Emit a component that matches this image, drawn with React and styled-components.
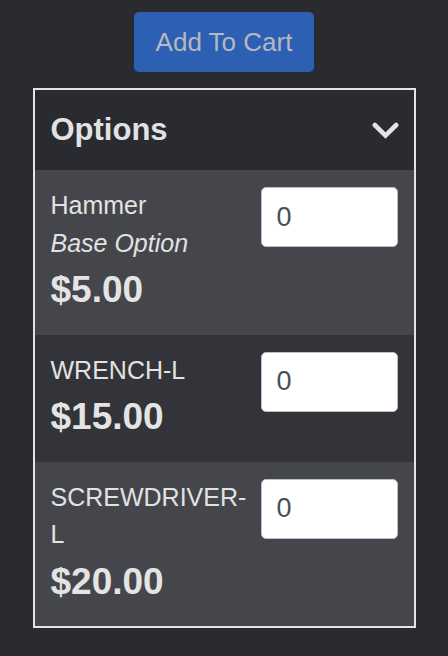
import React, { useState } from 'react';
import styled, { createGlobalStyle } from 'styled-components';

const GlobalStyle = createGlobalStyle`
  * {
    box-sizing: border-box;
  }
  html, body {
    margin: 0;
    padding: 0;
    background: #2a2b30;
    font-family: "Liberation Sans", Arial, Helvetica, sans-serif;
  }
`;

const Page = styled.div`
  min-height: 656px;
  display: flex;
  flex-direction: column;
  align-items: center;
  padding-top: 12px;
  gap: 16px;
`;

const CartButton = styled.button`
  width: 180px;
  height: 60px;
  border: 0;
  border-radius: 5px;
  background: #2d5fb3;
  color: #b4b8bf;
  font-family: inherit;
  font-size: 26px;
  cursor: pointer;
`;

const Panel = styled.div`
  width: 383px;
  border: 2px solid #e4e4e4;
`;

const Header = styled.div`
  height: 80px;
  display: flex;
  align-items: center;
  justify-content: space-between;
  padding: 0 15px 0 16px;
  background: #2a2b30;
  cursor: pointer;
`;

const Title = styled.h2`
  margin: 0;
  font-size: 31px;
  font-weight: bold;
  color: #e2e2e2;
`;

const Row = styled.div`
  display: grid;
  grid-template-columns: 1fr 137px;
  column-gap: 8px;
  align-items: start;
  padding: 17px 16px 17px;
  background: ${(p) => (p.$shade ? '#333439' : '#45464b')};
`;

const Info = styled.div`
  display: flex;
  flex-direction: column;
  color: #e2e2e2;
  font-size: 25px;
  line-height: 1.5;
`;

const Name = styled.span``;

const Note = styled.span`
  font-style: italic;
`;

const Price = styled.span`
  font-size: 37px;
  font-weight: bold;
  color: #e4e4e4;
`;

const Qty = styled.input`
  width: 137px;
  height: 60px;
  padding: 0 15px;
  border: 1px solid #bcc0c5;
  border-radius: 5px;
  background: #fff;
  color: #4a4f56;
  font-family: inherit;
  font-size: 27px;
  &:focus {
    outline: none;
  }
`;

const options = [
  { name: 'Hammer', note: 'Base Option', price: '$5.00' },
  { name: 'WRENCH-L', price: '$15.00' },
  { name: 'SCREWDRIVER-L', price: '$20.00' },
];

function Chevron() {
  return (
    <svg width="27" height="17" viewBox="0 0 27 17" fill="none">
      <polyline
        points="2.8,3 13.5,13.6 24.2,3"
        stroke="#e4e4e4"
        strokeWidth="4.6"
        strokeLinecap="round"
        strokeLinejoin="miter"
      />
    </svg>
  );
}

export default function App() {
  const [qty, setQty] = useState(options.map(() => '0'));

  const handleChange = (i) => (e) => {
    const next = [...qty];
    next[i] = e.target.value;
    setQty(next);
  };

  return (
    <>
      <GlobalStyle />
      <Page>
        <CartButton type="button">Add To Cart</CartButton>
        <Panel>
          <Header>
            <Title>Options</Title>
            <Chevron />
          </Header>
          {options.map((o, i) => (
            <Row key={o.name} $shade={i % 2 === 1}>
              <Info>
                <Name>{o.name}</Name>
                {o.note && <Note>{o.note}</Note>}
                <Price>{o.price}</Price>
              </Info>
              <Qty type="text" value={qty[i]} onChange={handleChange(i)} />
            </Row>
          ))}
        </Panel>
      </Page>
    </>
  );
}
